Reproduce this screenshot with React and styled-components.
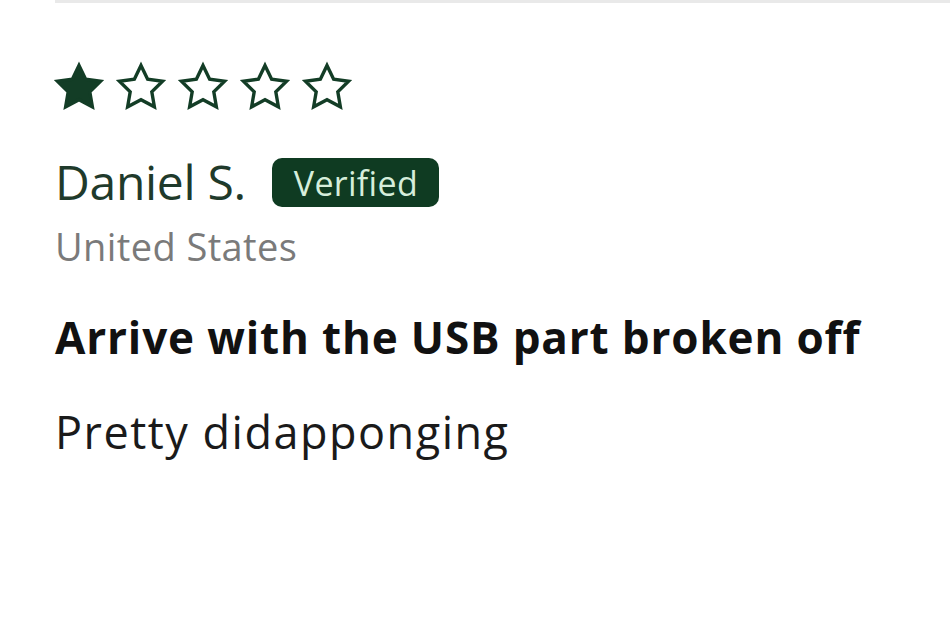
import React from "react";
import styled, { createGlobalStyle } from "styled-components";

const Global = createGlobalStyle`
  html, body { margin: 0; padding: 0; background: #ffffff; }
  body { font-family: "Open Sans", "Noto Sans", sans-serif; }
`;

const Page = styled.div`
  width: 950px;
  height: 627px;
  padding-left: 55px;
  box-sizing: border-box;
  overflow: hidden;
`;

const Divider = styled.div`
  height: 3px;
  background: #e9e9e9;
  margin-right: -10px;
`;

const Stars = styled.div`
  display: flex;
  gap: 8px;
  margin-top: 57px;
  margin-left: -3px;
`;

const StarSvg = styled.svg`
  width: 54px;
  height: 54px;
  display: block;
`;

const NameRow = styled.div`
  display: flex;
  align-items: flex-start;
  gap: 26px;
  margin-top: 44px;
`;

const Name = styled.div`
  font-size: 48px;
  line-height: 48px;
  color: #1f3a2b;
  letter-spacing: -0.3px;
`;

const Badge = styled.span`
  display: inline-flex;
  align-items: center;
  height: 49px;
  padding: 0 21px 0 22px;
  border-radius: 10px;
  background: #0f3b22;
  color: #d6eedb;
  font-size: 34px;
  line-height: 1;
  letter-spacing: 0.3px;
`;

const Country = styled.div`
  font-size: 38px;
  line-height: 38px;
  color: #7a7a7a;
  margin-top: 20px;
  letter-spacing: 0.4px;
`;

const Title = styled.div`
  font-size: 44px;
  line-height: 44px;
  font-weight: 700;
  color: #111111;
  margin-top: 50px;
  letter-spacing: 0.85px;
`;

const Body = styled.div`
  font-size: 45px;
  line-height: 45px;
  color: #1a1a1a;
  margin-top: 50px;
  letter-spacing: 1.5px;
`;

const STAR = "M12 2.4l2.95 6.1 6.65.95-4.8 4.7 1.15 6.65L12 17.65 6.05 20.8l1.15-6.65-4.8-4.7 6.65-.95z";

function Star({ filled }) {
  return (
    <StarSvg viewBox="0 0 24 24">
      <path
        d={STAR}
        fill={filled ? "#133d26" : "none"}
        stroke="#133d26"
        strokeWidth="1.5"
        strokeLinejoin="miter"
      />
    </StarSvg>
  );
}

export default function App() {
  return (
    <>
      <Global />
      <Page>
        <Divider />
        <Stars>
          {[1, 0, 0, 0, 0].map((f, i) => (
            <Star key={i} filled={!!f} />
          ))}
        </Stars>
        <NameRow>
          <Name>Daniel S.</Name>
          <Badge>Verified</Badge>
        </NameRow>
        <Country>United States</Country>
        <Title>Arrive with the USB part broken off</Title>
        <Body>Pretty didapponging</Body>
      </Page>
    </>
  );
}
